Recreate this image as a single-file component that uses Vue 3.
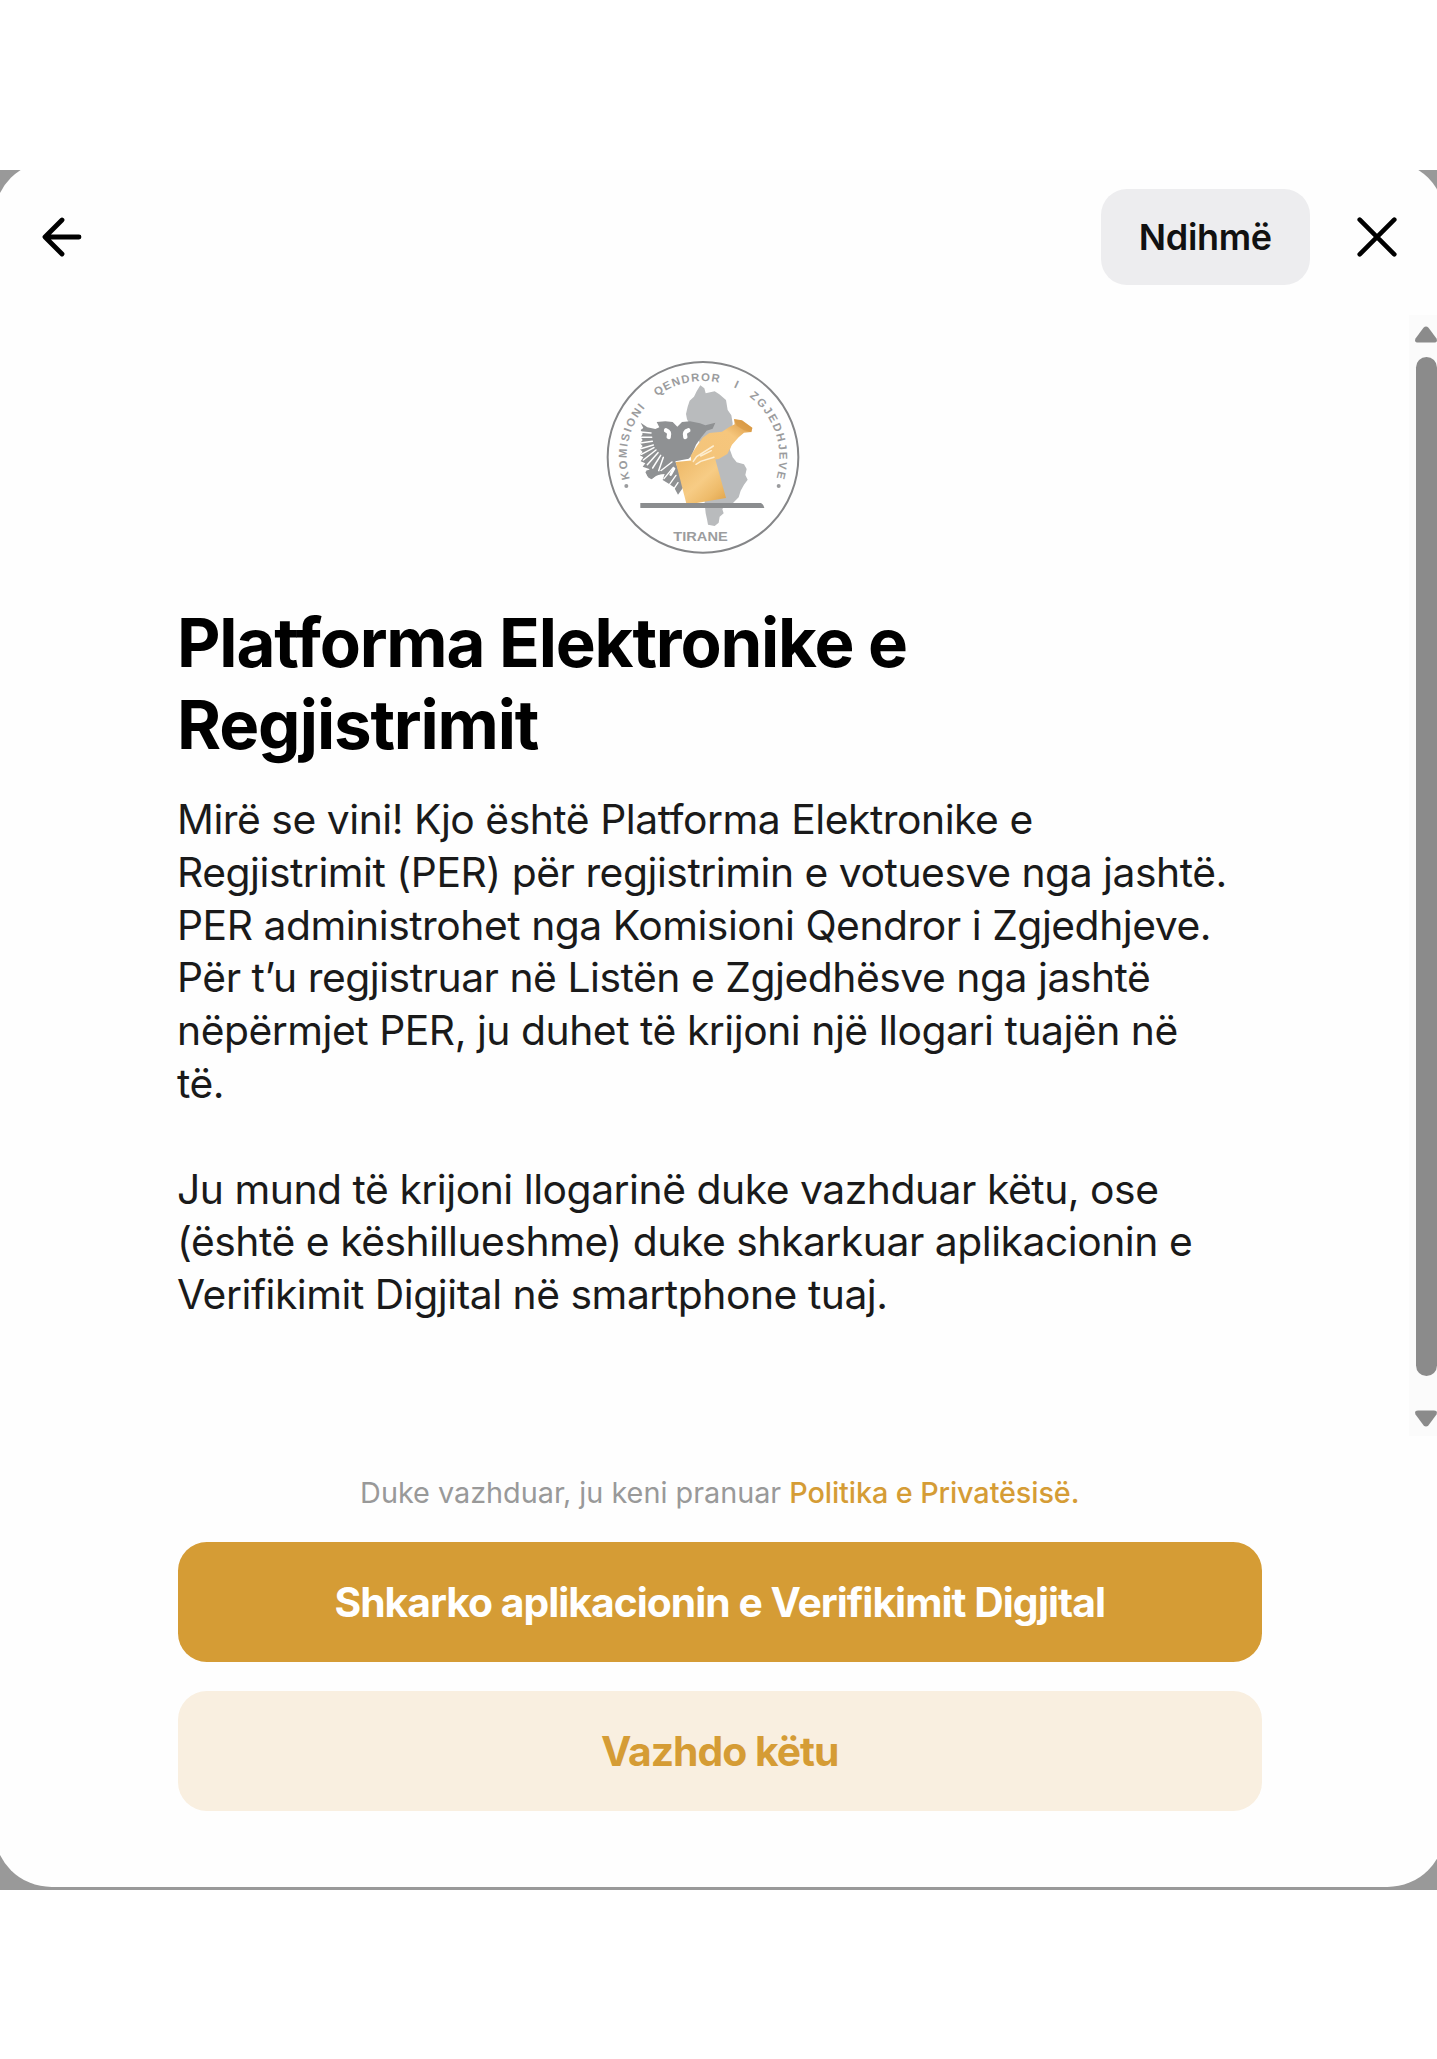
<script setup>
const intro = [
  'Mirë se vini! Kjo është Platforma Elektronike e Regjistrimit (PER) për regjistrimin e votuesve nga jashtë. PER administrohet nga Komisioni Qendror i Zgjedhjeve. Për t’u regjistruar në Listën e Zgjedhësve nga jashtë nëpërmjet PER, ju duhet të krijoni një llogari tuajën në të.',
  'Ju mund të krijoni llogarinë duke vazhduar këtu, ose (është e këshillueshme) duke shkarkuar aplikacionin e Verifikimit Digjital në smartphone tuaj.',
]
</script>

<template>
  <div class="page">
    <div class="backdrop">
      <section class="modal">
        <header class="head">
          <button class="icon" aria-label="Kthehu">
            <svg width="48" height="48" viewBox="0 0 48 48" fill="none" stroke="#000" stroke-width="4.8" stroke-linecap="round" stroke-linejoin="round">
              <path d="M41 24H7.5M24 7L7 24l17 17" />
            </svg>
          </button>
          <div class="actions">
            <button class="help">Ndihmë</button>
            <button class="icon" aria-label="Mbyll">
              <svg width="48" height="48" viewBox="0 0 48 48" fill="none" stroke="#000" stroke-width="4.6" stroke-linecap="round">
                <path d="M6.7 6.7l34.6 34.6M41.3 6.7L6.7 41.3" />
              </svg>
            </button>
          </div>
        </header>

        <div class="body">
          <div class="content">
            <svg class="logo" width="225" height="215" viewBox="0 0 675 645">
              <defs>
                <path id="ring" d="M339 551A229 229 0 0 1 339 93A229 229 0 0 1 339 551" />
                <linearGradient id="box" x1="0" y1="0" x2="1" y2="1">
                  <stop offset="0" stop-color="#edb765" />
                  <stop offset=".5" stop-color="#f7cc85" />
                  <stop offset=".75" stop-color="#eebb6a" />
                  <stop offset="1" stop-color="#dfa044" />
                </linearGradient>
                <linearGradient id="hand" x1="0" y1="1" x2="1" y2="0">
                  <stop offset="0" stop-color="#f3c47a" />
                  <stop offset=".65" stop-color="#f6c67c" />
                  <stop offset="1" stop-color="#d6923a" />
                </linearGradient>
              </defs>
              <circle cx="339" cy="322" r="286" fill="#fff" stroke="#858688" stroke-width="6" />

              <g class="ring-text">
                <text><textPath href="#ring" startOffset="294" textLength="228">KOMISIONI</textPath></text>
                <text><textPath href="#ring" startOffset="571" textLength="197">QENDROR</textPath></text>
                <text><textPath href="#ring" startOffset="813">I</textPath></text>
                <text><textPath href="#ring" startOffset="868" textLength="274">ZGJEDHJEVE</textPath></text>
                <text x="250" y="573" textLength="163" lengthAdjust="spacingAndGlyphs" font-size="39">TIRANE</text>
                <circle cx="109" cy="408" r="6" />
                <circle cx="566" cy="408" r="6" />
              </g>

              <path fill="#b9bbbd" d="M331 106L343 115 347 130 374 124 388 133 408 150 413 180 424 196 428 220 425 260 420 300 428 322 440 337 462 343 470 357 466 375 473 389 462 404 452 422 446 442 432 456 420 468 401 470 397 478 401 490 389 500 386 518 374 528 354 524 351 508 347 490 344 460 342 300 308 240 291 208 288 192 293 170 299 152 312 140 320 124z" />

              <path fill="#8f9193" d="M152 218L172 232 196 237 208 232 200 216 226 214 248 216 262 230 276 216 300 214 330 220 346 226 376 218 368 236 350 242 334 262 318 284 304 318 296 326 256 334 268 368 280 412 264 434 252 412 234 400 218 390 224 372 200 374 186 386 172 378 166 366 180 358 158 350 166 340 152 334 160 322 150 316 158 306 150 298 158 288 150 280 158 270 152 262 158 252 152 240 160 234z" />
              <g fill="none" stroke="#fff" stroke-linecap="round">
                <path stroke-width="4.500" d="M151 246l32 3M151 262l34 0M151 279l36-5M152 296l38-11M154 313l38-20M160 330l38-30M172 344l32-36M188 354l24-38M206 362l14-40" />
                <path stroke-width="4" d="M200 372l46-36M222 386l28-34M238 404l20-28M252 416l12-18" />
                <path stroke-width="13" d="M228 241q13 4 8 20M295 241q-14 4-9 20" />
                <path stroke-width="8" d="M252 356l-10 18" />
              </g>
              <path fill="#8f9193" d="M168 362l14-4 10 12 20-8 6 8-20 8-14 10-10-6z" />

              <path fill="url(#box)" d="M257 336l118-11 33 119-118 20z" />
              <path fill="url(#hand)" d="M302 317l14-22 22-32 20-14 38-4 22-14 16-8-2-16 24 4 31 22-3 13-22 2-16 14-20 22-14 28-26 15-24 3-28 4-22 6-8-4z" />
              <path fill="#d6953f" d="M432 208l24 4 31 22-3 13-22-6-22-14z" opacity=".55" />
              <path d="M310 334l10-14 50-32M318 343l14-9 40-12M332 318l32-16" fill="none" stroke="#fdeed2" stroke-width="4.500" stroke-linecap="round" />

              <path fill="#8b8d8f" d="M151 459h362q8 5 10 15H151z" />
            </svg>

            <h1>Platforma Elektronike e Regjistrimit</h1>
            <p v-for="(text, i) in intro" :key="i">{{ text }}</p>
          </div>

          <div class="scrollbar">
            <svg width="22" height="17" viewBox="0 0 22 17"><path fill="#8b8b8b" d="M8.5 1.8Q11 -1 13.500 1.800L21.500 12.500Q23 16.500 19 16.500H3Q-1 16.500.500 12.500z" /></svg>
            <div class="thumb"></div>
            <svg width="22" height="17" viewBox="0 0 22 17"><path fill="#8b8b8b" d="M8.500 15.200Q11 18 13.500 15.200L21.500 4.500Q23 .500 19 .500H3Q-1 .500.500 4.500z" /></svg>
          </div>
        </div>

        <footer class="foot">
          <div class="legal">Duke vazhduar, ju keni pranuar <a>Politika e Privatësisë.</a></div>
          <button class="btn primary">Shkarko aplikacionin e Verifikimit Digjital</button>
          <button class="btn secondary">Vazhdo këtu</button>
        </footer>
      </section>
    </div>
  </div>
</template>

<style>
body {
  margin: 0;
  background: #fff;
}
</style>

<style scoped>
.page {
  box-sizing: border-box;
  width: 1437px;
  height: 2059px;
  padding-top: 170px;
  overflow: hidden;
  font-family: Inter, "Liberation Sans", sans-serif;
}
.backdrop {
  display: flex;
  align-items: flex-start;
  height: 1720px;
  overflow: hidden;
  background: #999;
}
.modal {
  display: flex;
  flex: none;
  flex-direction: column;
  width: 1450.2px;
  height: 1726.7px;
  margin: -9.5px 0 0 -5.6px;
  border-radius: 57.6px;
  background: #fefefe;
}
button {
  border: 0;
  padding: 0;
  font-family: inherit;
}
.head {
  display: flex;
  box-sizing: border-box;
  flex: none;
  align-items: center;
  justify-content: space-between;
  height: 154px;
  padding: 0 43.8px 1.2px 43.9px;
}
.actions {
  display: flex;
  align-items: center;
  gap: 43.3px;
}
.icon {
  display: flex;
  background: none;
}
.help {
  width: 208.5px;
  height: 96px;
  border-radius: 26px;
  background: #ededef;
  color: #111;
  font-size: 36px;
  font-weight: 600;
  letter-spacing: -0.36px;
}
.body {
  display: flex;
  flex: none;
  justify-content: space-between;
  height: 1121.5px;
  padding: 0 7.6px 0 182.6px;
}
.content {
  width: 1057px;
  padding-top: 35.5px;
}
.logo {
  display: block;
  margin-left: 413px;
}
h1 {
  width: 800px;
  margin: 37px 0 27.8px;
  color: #000;
  font-size: 67.2px;
  font-weight: 700;
  letter-spacing: -1.17px;
  line-height: 81.6px;
}
p {
  margin: 0 0 52.8px;
  color: #1a1a1a;
  font-size: 40.8px;
  letter-spacing: -0.465px;
  line-height: 52.8px;
}
.scrollbar {
  display: flex;
  box-sizing: border-box;
  flex-direction: column;
  align-items: flex-end;
  justify-content: space-between;
  width: 28px;
  padding: 11px 0 9px;
  background: #fbfbfb;
}
.thumb {
  width: 21.5px;
  height: 1019px;
  margin-bottom: 19px;
  border-radius: 11px;
  background: #8b8b8b;
}
.foot {
  display: flex;
  flex-direction: column;
  width: 1084px;
  margin: 37.6px 0 0 183.3px;
}
.legal {
  color: #999;
  font-size: 28.8px;
  line-height: 38.4px;
  text-align: center;
}
.legal a {
  color: #d59c35;
  font-weight: 500;
  letter-spacing: -0.1px;
}
.btn {
  height: 120px;
  border-radius: 28.8px;
  font-size: 40.8px;
  font-weight: 700;
  letter-spacing: -0.98px;
}
.primary {
  margin-top: 29.7px;
  background: #d59c35;
  color: #fff;
}
.secondary {
  margin-top: 29px;
  background: #f9efe0;
  color: #d59c35;
}
.ring-text {
  fill: #9b9c9e;
  font-family: "Liberation Sans", Arial, sans-serif;
  font-size: 34px;
  font-weight: 700;
}
</style>
